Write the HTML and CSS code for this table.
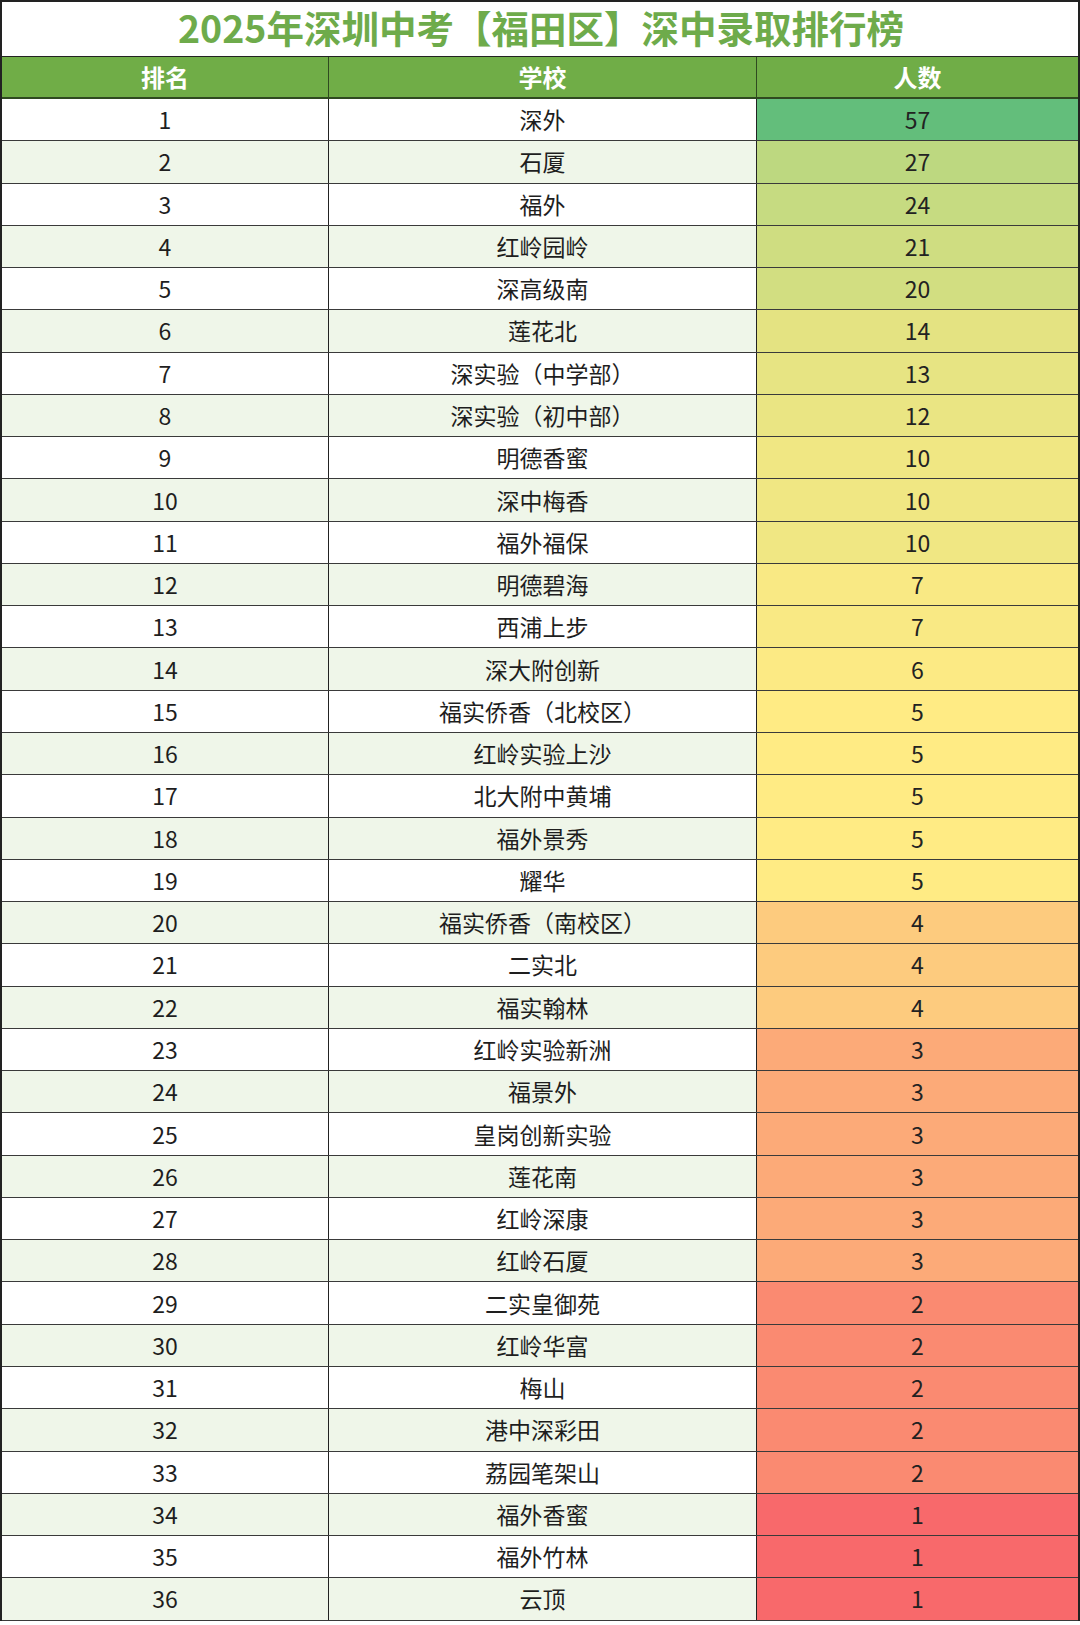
FILE: index.html
```html
<!DOCTYPE html>
<html lang="zh-CN">
<head>
<meta charset="utf-8">
<title>2025年深圳中考【福田区】深中录取排行榜</title>
<link rel="stylesheet" href="styles.css">
</head>
<body>
<div class="sheet">
  <div class="title">2025年深圳中考【福田区】深中录取排行榜</div>
  <div class="row head"><div class="c">排名</div><div class="c">学校</div><div class="c">人数</div></div>
  <div class="row"><div class="c">1</div><div class="c">深外</div><div class="c n" style="background:rgb(99,190,123)">57</div></div>
  <div class="row alt"><div class="c">2</div><div class="c">石厦</div><div class="c n" style="background:rgb(189,216,128)">27</div></div>
  <div class="row"><div class="c">3</div><div class="c">福外</div><div class="c n" style="background:rgb(198,219,129)">24</div></div>
  <div class="row alt"><div class="c">4</div><div class="c">红岭园岭</div><div class="c n" style="background:rgb(207,221,129)">21</div></div>
  <div class="row"><div class="c">5</div><div class="c">深高级南</div><div class="c n" style="background:rgb(210,222,129)">20</div></div>
  <div class="row alt"><div class="c">6</div><div class="c">莲花北</div><div class="c n" style="background:rgb(228,227,130)">14</div></div>
  <div class="row"><div class="c">7</div><div class="c">深实验（中学部）</div><div class="c n" style="background:rgb(231,228,131)">13</div></div>
  <div class="row alt"><div class="c">8</div><div class="c">深实验（初中部）</div><div class="c n" style="background:rgb(234,229,131)">12</div></div>
  <div class="row"><div class="c">9</div><div class="c">明德香蜜</div><div class="c n" style="background:rgb(240,231,131)">10</div></div>
  <div class="row alt"><div class="c">10</div><div class="c">深中梅香</div><div class="c n" style="background:rgb(240,231,131)">10</div></div>
  <div class="row"><div class="c">11</div><div class="c">福外福保</div><div class="c n" style="background:rgb(240,231,131)">10</div></div>
  <div class="row alt"><div class="c">12</div><div class="c">明德碧海</div><div class="c n" style="background:rgb(249,233,132)">7</div></div>
  <div class="row"><div class="c">13</div><div class="c">西浦上步</div><div class="c n" style="background:rgb(249,233,132)">7</div></div>
  <div class="row alt"><div class="c">14</div><div class="c">深大附创新</div><div class="c n" style="background:rgb(252,234,132)">6</div></div>
  <div class="row"><div class="c">15</div><div class="c">福实侨香（北校区）</div><div class="c n" style="background:rgb(255,235,132)">5</div></div>
  <div class="row alt"><div class="c">16</div><div class="c">红岭实验上沙</div><div class="c n" style="background:rgb(255,235,132)">5</div></div>
  <div class="row"><div class="c">17</div><div class="c">北大附中黄埔</div><div class="c n" style="background:rgb(255,235,132)">5</div></div>
  <div class="row alt"><div class="c">18</div><div class="c">福外景秀</div><div class="c n" style="background:rgb(255,235,132)">5</div></div>
  <div class="row"><div class="c">19</div><div class="c">耀华</div><div class="c n" style="background:rgb(255,235,132)">5</div></div>
  <div class="row alt"><div class="c">20</div><div class="c">福实侨香（南校区）</div><div class="c n" style="background:rgb(253,203,126)">4</div></div>
  <div class="row"><div class="c">21</div><div class="c">二实北</div><div class="c n" style="background:rgb(253,203,126)">4</div></div>
  <div class="row alt"><div class="c">22</div><div class="c">福实翰林</div><div class="c n" style="background:rgb(253,203,126)">4</div></div>
  <div class="row"><div class="c">23</div><div class="c">红岭实验新洲</div><div class="c n" style="background:rgb(252,170,120)">3</div></div>
  <div class="row alt"><div class="c">24</div><div class="c">福景外</div><div class="c n" style="background:rgb(252,170,120)">3</div></div>
  <div class="row"><div class="c">25</div><div class="c">皇岗创新实验</div><div class="c n" style="background:rgb(252,170,120)">3</div></div>
  <div class="row alt"><div class="c">26</div><div class="c">莲花南</div><div class="c n" style="background:rgb(252,170,120)">3</div></div>
  <div class="row"><div class="c">27</div><div class="c">红岭深康</div><div class="c n" style="background:rgb(252,170,120)">3</div></div>
  <div class="row alt"><div class="c">28</div><div class="c">红岭石厦</div><div class="c n" style="background:rgb(252,170,120)">3</div></div>
  <div class="row"><div class="c">29</div><div class="c">二实皇御苑</div><div class="c n" style="background:rgb(250,138,113)">2</div></div>
  <div class="row alt"><div class="c">30</div><div class="c">红岭华富</div><div class="c n" style="background:rgb(250,138,113)">2</div></div>
  <div class="row"><div class="c">31</div><div class="c">梅山</div><div class="c n" style="background:rgb(250,138,113)">2</div></div>
  <div class="row alt"><div class="c">32</div><div class="c">港中深彩田</div><div class="c n" style="background:rgb(250,138,113)">2</div></div>
  <div class="row"><div class="c">33</div><div class="c">荔园笔架山</div><div class="c n" style="background:rgb(250,138,113)">2</div></div>
  <div class="row alt"><div class="c">34</div><div class="c">福外香蜜</div><div class="c n" style="background:rgb(248,105,107)">1</div></div>
  <div class="row"><div class="c">35</div><div class="c">福外竹林</div><div class="c n" style="background:rgb(248,105,107)">1</div></div>
  <div class="row alt"><div class="c">36</div><div class="c">云顶</div><div class="c n" style="background:rgb(248,105,107)">1</div></div>
</div>
</body>
</html>
```
FILE: styles.css
```css
html, body {
  margin: 0;
  padding: 0;
  background: #ffffff;
}
.sheet {
  width: 1080px;
  box-sizing: border-box;
  border-left: 2px solid #222;
  border-right: 2px solid #222;
  font-family: "Noto Sans CJK SC", "Noto Sans", sans-serif;
  color: #1e1e1e;
}
.title {
  height: 57px;
  box-sizing: border-box;
  border-top: 2px solid #222;
  border-bottom: 1px solid #222;
  display: flex;
  align-items: center;
  justify-content: center;
  font-size: 37.5px;
  font-weight: 700;
  color: #6eab4b;
  line-height: 1;
  padding-bottom: 5px;
  padding-left: 2px;
}
.row {
  display: grid;
  grid-template-columns: 327px 428px 1fr;
  height: 42.28px;
  box-sizing: border-box;
  border-bottom: 1px solid #3a3a3a;
  background: #ffffff;
}
.row.alt {
  background: #eff6e9;
}
.row.head {
  height: 42px;
  background: #70ad47;
  border-bottom: 2px solid #2f4a20;
}
.c {
  display: flex;
  align-items: center;
  justify-content: center;
  font-size: 23px;
  border-right: 1px solid #222;
  line-height: 1;
}
.c:last-child {
  border-right: none;
}
.head .c {
  color: #ffffff;
  font-weight: 700;
  font-size: 24px;
  border-right-color: #2f4a20;
}
.n {
  color: #222;
}
```
